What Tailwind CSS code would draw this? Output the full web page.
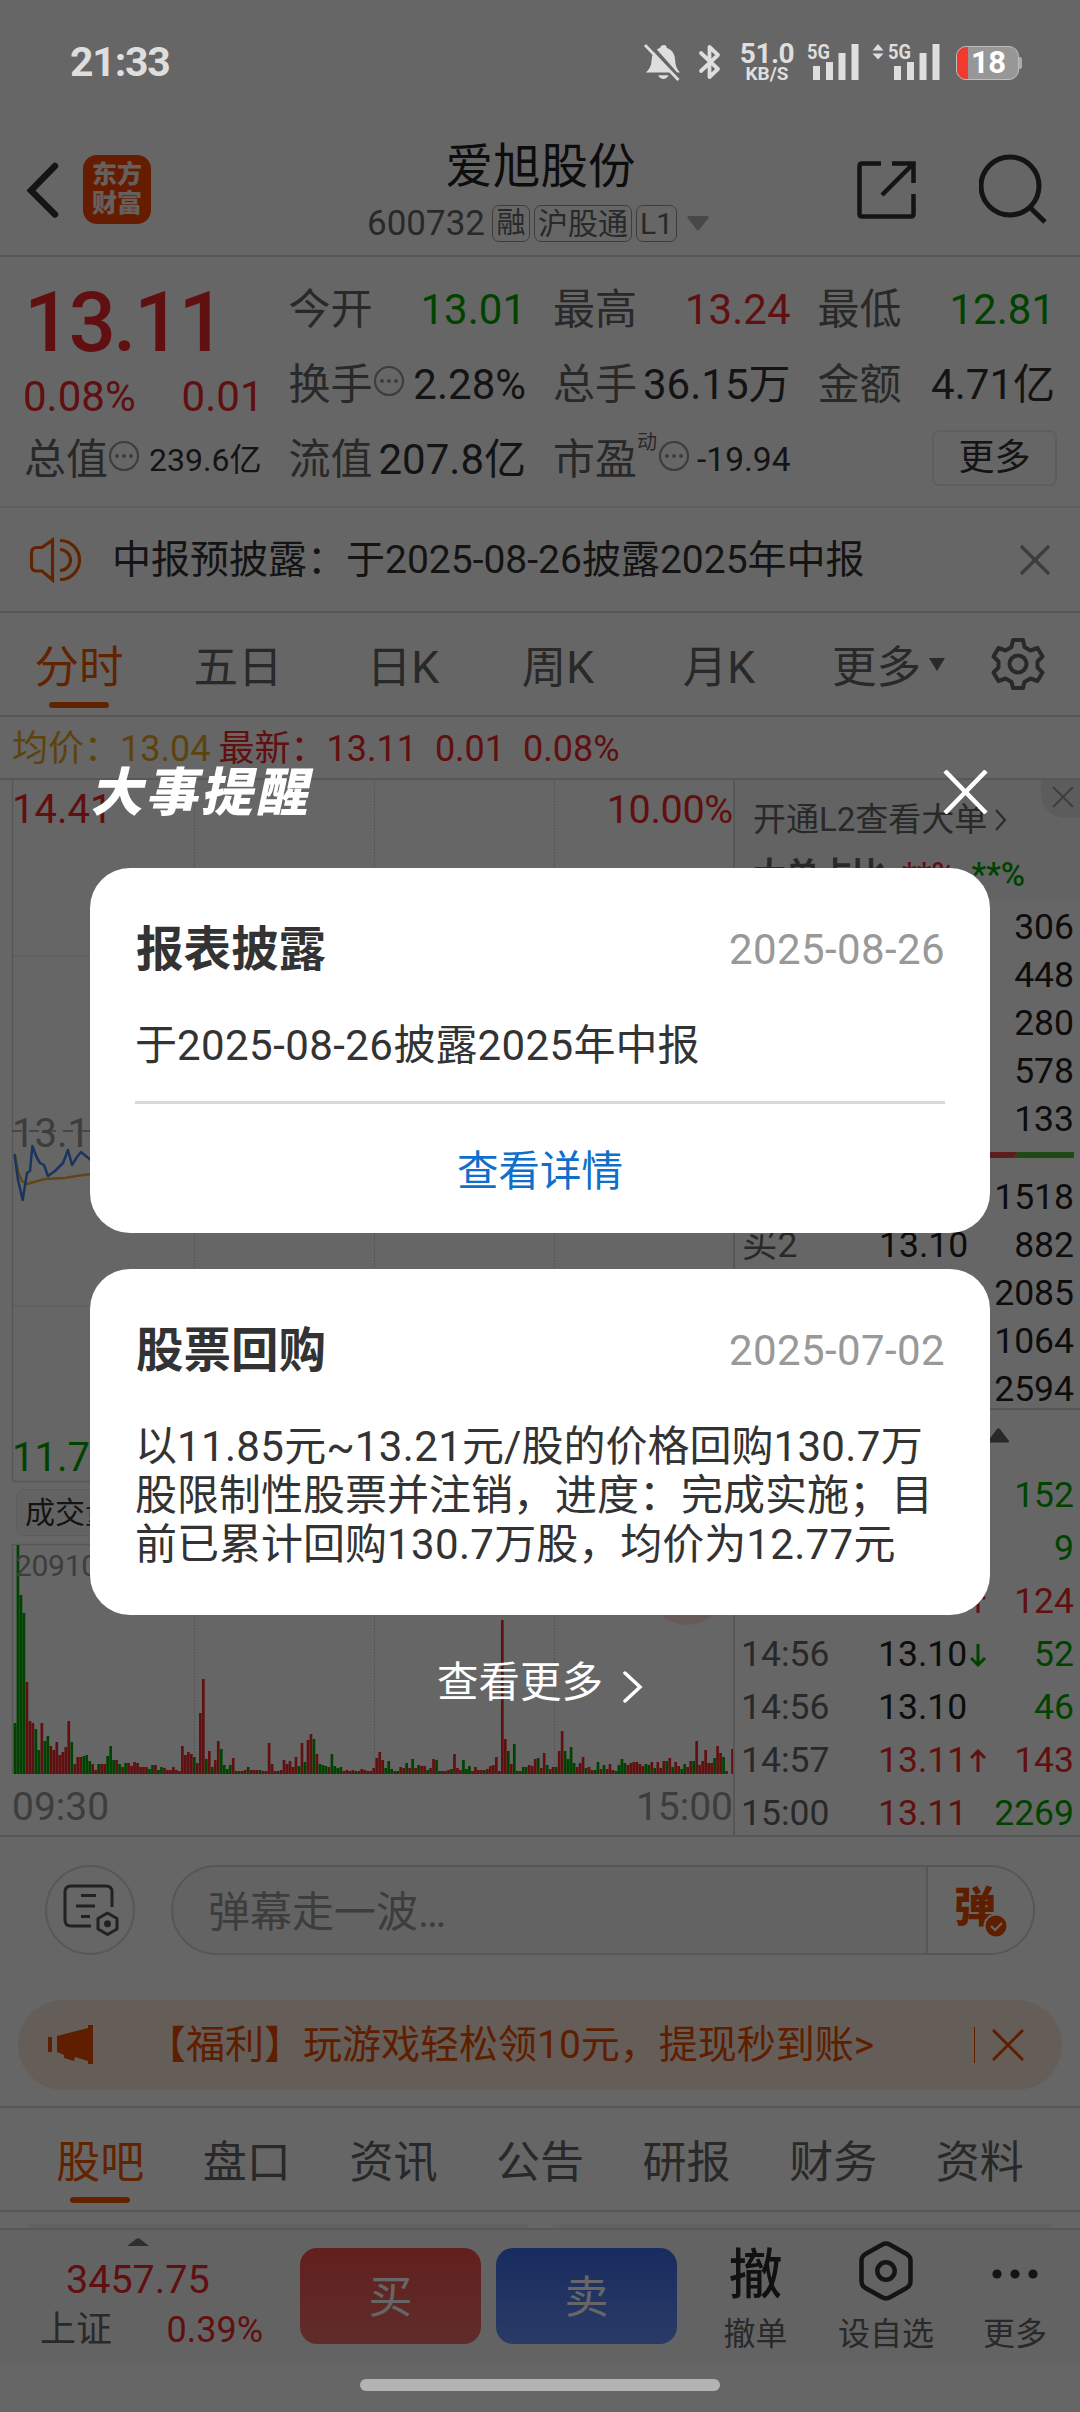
<!DOCTYPE html>
<html lang="zh-CN">
<head>
<meta charset="utf-8">
<title>爱旭股份 600732</title>
<script src="https://cdn.jsdelivr.net/npm/@tailwindcss/browser@4"></script>
</head>
<body class="relative h-[2412px] w-[1080px] overflow-hidden bg-white font-['Roboto','Noto_Sans_CJK_SC',sans-serif] leading-none whitespace-nowrap text-[#333]">

<!-- Quote page -->
<div class="flex h-[2412px] w-[1080px] flex-col">

  <!-- Header -->
  <header class="flex h-[257px] shrink-0 items-start border-b-2 border-[#d9d9d9] pt-[140px]">
    <div class="flex w-[368px] items-center pt-[15px] pl-[24px]">
      <svg class="h-[60px] w-[40px]" viewBox="0 0 40 60" fill="none" stroke="#333" stroke-width="6.5" stroke-linecap="round" stroke-linejoin="miter"><path d="M31 10 7 34.500 31 58.500" transform="translate(0 -4)"/></svg>
      <div class="ml-[19px] flex h-[69px] w-[68px] flex-col items-center justify-center gap-[4px] rounded-[14px] bg-[#ff4600] pb-[2px] text-[25px] font-black text-white/90">
        <span>东方</span><span>财富</span>
      </div>
    </div>
    <div class="flex w-[345px] flex-col items-center">
      <h1 class="mt-[4px] text-[47.500px] text-[#222]">爱旭股份</h1>
      <div class="mt-[14px] flex h-[36px] w-full items-center text-[#666]">
        <span class="ml-[-1px] text-[35px]">600732</span>
        <span class="ml-[7px] flex h-[37px] w-[38px] items-center justify-center rounded-[7px] border-[1.500px] border-[#999] text-[29px]">融</span>
        <span class="ml-[4px] flex h-[37px] w-[98px] items-center justify-center rounded-[7px] border-[1.500px] border-[#999] text-[30px]">沪股通</span>
        <span class="ml-[4px] flex h-[37px] w-[41px] items-center justify-center rounded-[7px] border-[1.500px] border-[#999] text-[30px]">L1</span>
        <svg class="ml-[10px] h-[15px] w-[22px]" viewBox="0 0 22 15"><path d="M1 0h20q1 1 .5 2L12 14q-1 1-2 0L.5 2Q0 1 1 0z" fill="#b3b3b3"/></svg>
      </div>
    </div>
    <svg class="mt-[20px] ml-[143px] h-[60px] w-[60px]" viewBox="0 0 60 60" fill="none" stroke="#333" stroke-width="4.500"><path d="M25 3.500H6q-2.500 0-2.500 2.500v48q0 2.500 2.500 2.500h49q2.500 0 2.500-2.500V34M36 3.500h21.500V23M57 4 26 35"/></svg>
    <svg class="mt-[12px] ml-[63px] h-[74px] w-[72px]" viewBox="0 0 72 74" fill="none" stroke="#333" stroke-width="5"><circle cx="31" cy="34" r="29"/><path d="M50.500 55 66 70"/></svg>
  </header>

  <!-- Key figures -->
  <section class="grid h-[251px] shrink-0 grid-cols-4 grid-rows-[75px_75px_75px] gap-x-[27px] border-b-2 border-[#ededed] pt-[15px] pr-[25px] pl-[24px] text-[42px] text-[#666]">
    <div class="row-span-2 flex flex-col text-[#f12a2a]">
      <span class="mt-[9px] text-[83px] font-medium tracking-[-2.500px]">13.11</span>
      <span class="mt-[12px] mr-[-2px] ml-[-1px] flex justify-between"><span>0.08%</span><span>0.01</span></span>
    </div>
    <div class="flex items-center justify-between">今开<span class="text-[#00a800]">13.01</span></div>
    <div class="flex items-center justify-between">最高<span class="text-[#f12a2a]">13.24</span></div>
    <div class="flex items-center justify-between">最低<span class="text-[#00a800]">12.81</span></div>

    <div class="flex items-center justify-between"><span class="flex items-center">换手<svg class="mb-[8px] h-[32px] w-[32px]" viewBox="0 0 32 32"><circle cx="16" cy="16" r="14" fill="none" stroke="#999" stroke-width="2.200"/><g fill="#999"><circle cx="9" cy="16" r="2"/><circle cx="16" cy="16" r="2"/><circle cx="23" cy="16" r="2"/></g></svg></span><span class="text-[#333]">2.28%</span></div>
    <div class="flex items-center justify-between">总手<span class="text-[#333]">36.15万</span></div>
    <div class="flex items-center justify-between">金额<span class="text-[#333]">4.71亿</span></div>

    <div class="flex items-center justify-between"><span class="flex items-center">总值<svg class="mb-[8px] h-[32px] w-[32px]" viewBox="0 0 32 32"><circle cx="16" cy="16" r="14" fill="none" stroke="#999" stroke-width="2.200"/><g fill="#999"><circle cx="9" cy="16" r="2"/><circle cx="16" cy="16" r="2"/><circle cx="23" cy="16" r="2"/></g></svg></span><span class="text-[32px] text-[#333]">239.6亿</span></div>
    <div class="flex items-center justify-between">流值<span class="text-[#333]">207.8亿</span></div>
    <div class="flex items-center justify-between"><span class="flex items-center">市盈<span class="mb-[36px] text-[20px]">动</span><svg class="mb-[8px] ml-[1px] h-[32px] w-[32px]" viewBox="0 0 32 32"><circle cx="16" cy="16" r="14" fill="none" stroke="#999" stroke-width="2.200"/><g fill="#999"><circle cx="9" cy="16" r="2"/><circle cx="16" cy="16" r="2"/><circle cx="23" cy="16" r="2"/></g></svg></span><span class="text-[33.500px] text-[#333]">-19.94</span></div>
    <div class="flex items-center justify-end"><span class="mr-[-2px] mb-[4px] flex h-[56px] w-[125px] items-center justify-center rounded-[7px] border-2 border-[#ebebeb] text-[36px] text-[#333]">更多</span></div>
  </section>

  <!-- Notice -->
  <section class="flex h-[105px] shrink-0 items-center border-b-2 border-[#d9d9d9] pr-[30px] pl-[28px]">
    <svg class="h-[46px] w-[54px]" viewBox="0 0 54 46" fill="none" stroke="#f55a00" stroke-width="3.200"><path d="M24.500 3v40L14 34H7.500Q3.500 33 3.500 29V16Q3.500 11 8 10.500H14zM32 3.500a19.500 19.500 0 0 1 0 39M32 12.500a10.500 10.500 0 0 1 0 21"/></svg>
    <p class="ml-[30px] grow pt-[1px] text-[39px]">中报预披露：于2025-08-26披露2025年中报</p>
    <svg class="h-[30px] w-[30px]" viewBox="0 0 30 30" stroke="#999" stroke-width="3.500"><path d="m1 1 28 28M29 1 1 29"/></svg>
  </section>

  <!-- Period tabs -->
  <nav class="flex h-[104px] shrink-0 items-stretch border-b-2 border-[#d9d9d9] text-[44.500px] text-[#666]">
    <div class="flex w-[158px] flex-col items-center text-[#f55a00]"><span class="mt-[33px]">分时</span><span class="mt-[11px] h-[6px] w-[60px] rounded-full bg-[#f55a00]"></span></div>
    <span class="mt-[33px] w-[160px] text-center">五日</span>
    <span class="mt-[33px] w-[170px] text-center">日K</span>
    <span class="mt-[33px] w-[140px] text-center">周K</span>
    <span class="mt-[33px] w-[182px] text-center">月K</span>
    <span class="mt-[33px] ml-[22px] flex">更多<svg class="mt-[12px] ml-[8px] h-[14px] w-[16px]" viewBox="0 0 16 14"><path d="M0 0h16L8 13z" fill="#666"/></svg></span>
    <svg class="mt-[24px] ml-[46px] h-[54px] w-[54px]" viewBox="0 0 54 54" fill="none" stroke="#666" stroke-width="4" stroke-linejoin="round"><circle cx="27" cy="27" r="8.500"/><path d="M22 3h10l1.500 7 6 3.500 7-2.500 5 8.500-5 5v6l5 5-5 8.500-7-2.500-6 3.500L32 51H22l-1.500-6-6-3.500-7 2.500-5-8.500 5-5v-6l-5-5 5-8.500 7 2.500 6-3.500z"/></svg>
  </nav>

  <!-- Latest figures -->
  <div class="flex h-[63px] shrink-0 items-center border-b-2 border-[#d9d9d9] pt-[2px] pl-[12px] text-[36px] text-[#f12a2a]">
    <span class="text-[#e8a825]">均价：13.04</span><span class="ml-[8px]">最新：13.11</span><span class="ml-[18px]">0.01</span><span class="ml-[18px]">0.08%</span>
  </div>

  <!-- Chart and order book -->
  <section class="flex h-[1057px] shrink-0 border-b-2 border-[#d9d9d9]">
    <div class="relative w-[735px] border-r-2 border-[#d9d9d9]">
      <svg class="block h-[1055px] w-[733px]" viewBox="0 0 733 1055" fill="none">
        <g stroke="#d9d9d9" stroke-width="1.500"><path d="M12.500 0v701M12 701.500h720M12.500 764v230M12 764.500h720"/></g>
        <g stroke="#ccc" stroke-width="1" stroke-dasharray="1.500 1.500"><path d="M194.500 0v700M374.500 0v700M554.500 0v700M194.500 764v230M374.500 764v230M554.500 764v230M12 176h720M12 526h720"/></g>
        <path d="M12 351h720" stroke="#999" stroke-width="1.500" stroke-dasharray="10 7"/>
        <circle cx="687" cy="806" r="39" fill="#ffe4dc"/>
        <path d="M15 375 18 392 22 401 27 404 34 402 45 399 65 398 76 396 92 394" stroke="#f0b03a" stroke-width="2.500"/>
        <path d="M14.500 374 18 400 22.700 420 27 393 30 391 32.400 366 36.500 377 40 383 44 385 48 396 55 391 63 383 68 370 72 385 77 377 81 372 92 381" stroke="#3f86e8" stroke-width="2.500" stroke-linejoin="round"/>
        <g id="volume"></g>
      </svg>
      <span class="absolute top-[10px] left-[12px] text-[40px] text-[#f12a2a]">14.41</span>
      <span class="absolute top-[10px] right-0 text-[39.500px] tracking-[-0.300px] text-[#f12a2a]">10.00%</span>
      <span class="absolute top-[334px] left-[12px] text-[40px] text-[#999]">13.1</span>
      <span class="absolute top-[658px] left-[12px] text-[40px] text-[#00a800]">11.7</span>
      <span class="absolute top-[709px] left-[16px] flex h-[47px] w-[130px] items-center rounded-[8px] border-[1.500px] border-[#e8e8e8] bg-[#f7f7f7] pt-[1px] pl-[8px] text-[30px]">成交量</span>
      <span class="absolute top-[771px] left-[15px] text-[30px] tracking-[-0.300px] text-[#999]">20910</span>
      <span class="absolute top-[1008px] left-[12px] text-[39px] text-[#999]">09:30</span>
      <span class="absolute top-[1008px] right-0 text-[39px] text-[#999]">15:00</span>
    </div>
    <div class="flex grow flex-col overflow-hidden text-[35.500px] text-[#222]">
      <div class="relative h-[120px] shrink-0 bg-[#f7f7f7] pt-[23px] pl-[18px] text-[33px] text-[#666]">
        <div class="flex items-center">开通L2查看大单<svg class="ml-[8px] h-[22px] w-[12px]" viewBox="0 0 12 22" fill="none" stroke="#666" stroke-width="2"><path d="m1 1 9 10-9 10"/></svg></div>
        <div class="mt-[22px] flex font-medium"><span class="font-bold">大单占比</span><span class="ml-[17px] text-[#f12a2a]">**%</span><span class="ml-[16px] text-[#00a800]">**%</span></div>
        <div class="absolute top-0 right-0 flex h-[38px] w-[39px] items-center justify-center rounded-bl-[24px] bg-[#e6e6e6] pb-[4px] pl-[4px]"><svg class="h-[22px] w-[22px]" viewBox="0 0 22 22" stroke="#999" stroke-width="2"><path d="m1 1 20 20M21 1 1 21"/></svg></div>
      </div>
      <div class="flex h-[243px] shrink-0 flex-col items-end pt-[3px] pr-[6px] leading-[48px]"><span>306</span><span>448</span><span>280</span><span>578</span><span>133</span></div>
      <svg class="mt-[9px] h-[6px] w-[345px] shrink-0" viewBox="0 0 345 6"><path d="M6 0h277l-4 6H6z" fill="#e84a4a"/><path d="M283 0h56v6h-60z" fill="#4fb63a"/></svg>
      <div class="mt-[15px] flex h-[237px] shrink-0 flex-col border-b-2 border-[#d9d9d9] pr-[6px] pl-[7px] leading-[48px]">
        <div class="text-right">1518</div>
        <div class="flex justify-between"><span class="w-[137px] text-[#666]">买2</span><span>13.10</span><span class="grow text-right">882</span></div>
        <div class="text-right">2085</div>
        <div class="text-right">1064</div>
        <div class="text-right">2594</div>
      </div>
      <div class="h-[59px] shrink-0 pt-[18px] pl-[252px]"><svg class="h-[15px] w-[23px]" viewBox="0 0 23 15"><path d="M10 1q1.500-1.500 3 0l9 12q.5 1-1 1.500H2Q.5 14 1 13z" fill="#666"/></svg></div>
      <div class="flex flex-col pr-[6px] pl-[6px] leading-[53px]">
        <div class="text-right text-[#00a800]">152</div>
        <div class="text-right text-[#00a800]">9</div>
        <div class="flex items-center text-[#f12a2a]"><svg class="ml-[229px] h-[24px] w-[16px]" viewBox="0 0 16 24" fill="none" stroke="#f12a2a" stroke-width="3"><path d="M8 23V2M1 9l7-7 7 7"/></svg><span class="grow text-right">124</span></div>
        <div class="flex items-center"><span class="w-[137px] text-[#666]">14:56</span><span class="w-[92px]">13.10</span><svg class="h-[24px] w-[16px]" viewBox="0 0 16 24" fill="none" stroke="#00a800" stroke-width="3"><path d="M8 1v21M1 15l7 7 7-7"/></svg><span class="grow text-right text-[#00a800]">52</span></div>
        <div class="flex items-center"><span class="w-[137px] text-[#666]">14:56</span><span class="w-[92px]">13.10</span><span class="grow text-right text-[#00a800]">46</span></div>
        <div class="flex items-center text-[#f12a2a]"><span class="w-[137px] text-[#666]">14:57</span><span class="w-[92px]">13.11</span><svg class="h-[24px] w-[16px]" viewBox="0 0 16 24" fill="none" stroke="#f12a2a" stroke-width="3"><path d="M8 23V2M1 9l7-7 7 7"/></svg><span class="grow text-right">143</span></div>
        <div class="flex items-center text-[#f12a2a]"><span class="w-[137px] text-[#666]">15:00</span><span class="w-[92px]">13.11</span><span class="grow text-right text-[#00a800]">2269</span></div>
      </div>
    </div>
  </section>

  <!-- Live comment bar -->
  <section class="flex h-[163px] shrink-0 items-start pt-[28px] pl-[45px]">
    <div class="flex h-[90px] w-[90px] items-center justify-center rounded-full border-2 border-[#dadcdc]">
      <svg class="h-[54px] w-[58px]" viewBox="0 0 58 54" fill="none" stroke="#555" stroke-width="3"><path d="M51 24V9q0-6-6-6H10Q4 3 4 9v28q0 6 6 6h20M20 12.500h15M15 23h19M20 33.500h9"/><path d="m46.500 30 9.500 5.500v10.500l-9.500 5.500-9.500-5.500V35.500z" stroke-linejoin="round"/><circle cx="46.500" cy="40.700" r="2" fill="#555"/></svg>
    </div>
    <div class="ml-[36px] flex h-[90px] w-[864px] overflow-hidden rounded-full border-2 border-[#d5d9d9] bg-[#f7f7f7]">
      <span class="mt-[25px] ml-[35px] text-[42px] text-[#999]">弹幕走一波…</span>
      <div class="relative ml-auto w-[107px] border-l-2 border-[#d5d9d9] bg-white">
        <span class="absolute top-[20px] left-[26px] text-[42px] font-black text-[#f04c00]">弹</span>
        <svg class="absolute top-[46px] left-[55px] h-[26px] w-[26px]" viewBox="0 0 26 26"><circle cx="13" cy="13" r="11.500" fill="#f04c00" stroke="#fff" stroke-width="2"/><path d="m8 13 4 4 7-7" fill="none" stroke="#fff" stroke-width="2.200"/></svg>
      </div>
    </div>
  </section>

  <!-- Promotion -->
  <section class="mx-[18px] flex h-[90px] shrink-0 items-center rounded-full bg-[#fae8dc] text-[39px] text-[#f04c00]">
    <svg class="ml-[30px] h-[40px] w-[46px]" viewBox="0 0 46 40" fill="#f04c00"><path d="M0 12h4v15H0zM9 11 40 3V0h5v39h-5v-3l-13-4-1 4-10-3v-3L9 27z"/></svg>
    <span class="ml-[53px]">【福利】玩游戏轻松领10元，提现秒到账&gt;</span>
    <span class="mr-[17px] ml-auto h-[36px] w-[1px] bg-[#f04c00]"></span>
    <svg class="mr-[38px] h-[32px] w-[32px]" viewBox="0 0 32 32" stroke="#f04c00" stroke-width="3"><path d="m1 1 30 30M31 1 1 31"/></svg>
  </section>

  <!-- Content tabs -->
  <nav class="mt-[16px] flex h-[106px] shrink-0 border-y-2 border-[#d9d9d9] px-[27px] pt-[33px] text-[44px] text-[#666]">
    <div class="flex flex-1 flex-col items-center text-[#f55a00]">股吧<span class="mt-[12px] h-[6px] w-[60px] rounded-full bg-[#f55a00]"></span></div>
    <span class="flex-1 text-center">盘口</span><span class="flex-1 text-center">资讯</span><span class="flex-1 text-center">公告</span><span class="flex-1 text-center">研报</span><span class="flex-1 text-center">财务</span><span class="flex-1 text-center">资料</span>
  </nav>
  <div class="flex h-[16px] shrink-0 items-end gap-[23px] overflow-hidden px-[27px]">
    <span class="h-[4px] flex-1 rounded-t-[12px] bg-[#f2f5fb]"></span><span class="h-[4px] flex-1 rounded-t-[12px] bg-[#fbf4f1]"></span>
  </div>

  <!-- Trade bar -->
  <footer class="flex h-[136px] shrink-0 border-t-2 border-[#d9d9d9] bg-[#f7f7f7]">
    <div class="flex w-[300px] flex-col pr-[37px] pl-[40px]">
      <svg class="mt-[8px] ml-[87px] h-[8px] w-[22px]" viewBox="0 0 22 8"><path d="M0 8 9 1q2-1.500 4 0l9 7z" fill="#777"/></svg>
      <span class="mt-[14px] ml-[26px] text-[39.500px] text-[#f12a2a]">3457.75</span>
      <span class="mt-[12px] flex justify-between text-[36px] text-[#666]">上证<span class="text-[#f12a2a]">0.39%</span></span>
    </div>
    <div class="mt-[18px] flex h-[96px] w-[181px] items-center justify-center rounded-[17px] bg-linear-to-b from-[#f54e4b] to-[#ee706b] pt-[4px] text-[44px] text-white">买</div>
    <div class="mt-[18px] ml-[15px] flex h-[96px] w-[181px] items-center justify-center rounded-[17px] bg-linear-to-b from-[#3c6eee] to-[#6b93ff] pt-[4px] text-[44px] text-white">卖</div>
    <div class="ml-[23px] flex w-[111px] flex-col items-center text-[32px] text-[#666]"><span class="mt-[19px] text-[54px] font-medium text-[#2b2b2b]">撤</span><span class="mt-[15px]">撤单</span></div>
    <div class="ml-[12px] flex w-[126px] flex-col items-center text-[32px] text-[#666]"><svg class="mt-[11px] h-[60px] w-[54px]" viewBox="0 0 54 60" fill="none" stroke="#333" stroke-width="4.500"><path d="M23 3.700q4-2.200 8 0l17 9.600q3.500 2.200 3.500 6v21.400q0 3.800-3.500 6l-17 9.600q-4 2.200-8 0L6 46.700q-3.500-2.200-3.500-6V19.300q0-3.800 3.500-6z"/><circle cx="27" cy="30" r="8.700"/></svg><span class="mt-[17px]">设自选</span></div>
    <div class="ml-[17px] flex w-[98px] flex-col items-center text-[32px] text-[#666]"><svg class="mt-[11px] h-[60px] w-[54px]" viewBox="0 0 54 60" fill="#333"><circle cx="9" cy="33" r="4.600"/><circle cx="27" cy="33" r="4.600"/><circle cx="45" cy="33" r="4.600"/></svg><span class="mt-[17px]">更多</span></div>
  </footer>
</div>

<!-- Event reminder overlay -->
<div class="absolute inset-0 flex flex-col bg-black/60">
  <div class="flex h-[120px] items-start pt-[44px] pl-[70px] text-[#dedede]">
    <span class="mt-[-2px] text-[41px] font-bold tracking-[-1.200px]">21:33</span>
    <svg class="absolute top-[42px] left-[641px] h-[40px] w-[82px]" viewBox="0 0 82 40">
      <path d="M4 31q6-5 6-12 0-11 9-14 1-3 4-3t3 3q9 3 9 14 0 7 5 12zM17 34h11q-2 4-5.500 4T17 34z" fill="#dedede" transform="translate(1 1) scale(.95)"/>
      <path d="m6.500 0 32 36" stroke="#666" stroke-width="4"/><path d="m4 3 33.500 35" stroke="#dedede" stroke-width="2.800"/>
      <path d="m60 11 17 16-8.500 8V5L77 13 60 29" fill="none" stroke="#dedede" stroke-width="3.800" stroke-linejoin="round" stroke-linecap="round"/>
    </svg>
    <span class="absolute top-[40px] left-[740px] flex w-[54px] flex-col items-center font-bold"><span class="h-[25px] text-[28px] leading-[27px] tracking-[-0.500px]">51.0</span><span class="text-[19px] leading-[17px]">KB/S</span></span>
    <svg class="absolute top-[36px] left-[804px] h-[46px] w-[138px]" viewBox="0 -6 138 46" fill="#dedede">
      <text x="3" y="17" class="text-[21px] font-bold" textLength="23" lengthAdjust="spacingAndGlyphs">5G</text>
      <path d="M9 24h7v14H9zM22 20h7v18h-7zM34.500 11h7v27h-7zM47.500 2h7v36h-7z"/>
      <path d="m74 2 5.500 6.500h-11zM74 17.500l5.500-6h-11z"/>
      <text x="84" y="17" class="text-[21px] font-bold" textLength="23" lengthAdjust="spacingAndGlyphs">5G</text>
      <path d="M90 24h7v14h-7zM103 20h7v18h-7zM115.500 11h7v27h-7zM128.500 2h7v36h-7z"/>
    </svg>
    <span class="absolute top-[46px] left-[956px] flex h-[34px] w-[63px] rounded-[10px] border border-[#bdbdbd] bg-[#979797]"><span class="w-[11px] rounded-l-[9px] bg-[#f03a2e]"></span><span class="ml-[3px] w-[34px] text-center text-[31px] leading-[32px] font-bold tracking-[-0.500px] text-white">18</span></span>
    <span class="absolute top-[57px] left-[1019px] h-[12px] w-[3px] rounded-r-[2px] bg-[#aaa]"></span>
  </div>

  <div class="mt-[645px] flex h-[103px] items-start justify-between pr-[92px] pl-[94px] text-white">
    <h2 class="mt-[3px] -skew-x-12 text-[52px] font-black tracking-[3px]">大事提醒</h2>
    <svg class="mt-[5px] h-[44px] w-[45px]" viewBox="0 0 45 44" stroke="#fff" stroke-width="4.500"><path d="m2 1 41 42M43 1 2 43"/></svg>
  </div>

  <article class="mx-[90px] h-[365px] rounded-[40px] bg-white px-[45px] pt-[57px]">
    <div class="flex items-center justify-between"><h3 class="ml-[1px] pt-[2px] text-[47.500px] font-bold">报表披露</h3><time class="text-[42px] tracking-[0.400px]">
      <span class="text-[#999]">2025-08-26</span></time></div>
    <p class="mt-[50px] text-[42px]">于<span class="tracking-[0.430px]">2025-08-26</span>披露<span class="tracking-[0.430px]">2025</span>年中报</p>
    <div class="mt-[34px] h-[3px] bg-[#d8d8d8]"></div>
    <p class="mt-[47px] text-center text-[41.500px] text-[#0f6fcc]">查看详情</p>
  </article>
  <article class="mx-[90px] mt-[36px] h-[346px] rounded-[40px] bg-white px-[45px] pt-[57px]">
    <div class="flex items-center justify-between"><h3 class="ml-[1px] pt-[2px] text-[47.500px] font-bold">股票回购</h3><time class="text-[42px] tracking-[0.400px]"><span class="text-[#999]">2025-07-02</span></time></div>
    <p class="mt-[46px] text-[42px] leading-[49px]">以<span class="tracking-[0.350px]">11.85</span>元~<span class="tracking-[0.350px]">13.21</span>元/股的价格回购<span class="tracking-[0.350px]">130.7</span>万<br>股限制性股票并注销，进度：完成实施；目<br>前已累计回购<span class="tracking-[0.350px]">130.7</span>万股，均价为<span class="tracking-[0.350px]">12.77</span>元</p>
  </article>
  <div class="mt-[47px] flex items-start justify-center text-[41.500px] text-white">查看更多<svg class="mt-[9px] ml-[20px] h-[32px] w-[20px]" viewBox="0 0 20 32" fill="none" stroke="#fff" stroke-width="3.500" stroke-linecap="round"><path d="m2 2 15 14L2 30"/></svg></div>
  <span class="mx-auto mt-auto mb-[21px] h-[12px] w-[360px] rounded-full bg-[#b3b3b3]"></span>
</div>

<script>
  // Volume per minute: bar height, positive when the price rose, negative when it fell
  const v = [-51,-229,-179,-161,92,53,51,-45,-24,51,-33,-38,28,24,32,19,22,27,53,-32,10,17,17,-18,-19,-13,10,4,-10,10,10,-18,-28,-14,14,-10,7,-11,11,8,12,11,7,7,7,-5,-9,9,-4,-7,6,4,4,7,4,3,28,19,22,20,-17,11,61,95,-15,23,-7,14,33,-25,-9,-5,-9,16,3,-3,3,4,-7,4,4,4,-4,3,3,31,10,3,-3,4,14,10,13,7,17,-8,31,-12,34,40,-35,20,-10,-9,-8,7,-20,-8,-6,-7,3,4,3,4,-3,3,5,4,3,3,6,16,22,14,-6,-13,-5,3,-3,7,6,-11,6,-15,6,-9,8,8,-4,6,15,-14,-3,3,3,4,-5,20,6,4,-14,-5,-8,3,7,4,4,-4,5,8,9,17,3,154,35,-23,10,-30,-3,3,-7,-7,9,8,15,-16,6,21,-9,5,7,-7,23,43,-23,-15,-27,-11,7,11,17,-6,7,4,-4,-12,5,-9,5,10,4,-3,-9,-15,-11,9,11,12,12,10,8,-10,-9,12,-6,12,6,13,-13,16,-7,12,8,-5,-10,7,13,-13,33,9,13,24,11,11,-16,28,21,-17,3,0,25];
  const path = s => v.map((h, i) => h * s > 0 ? `M${(13.6 + i * 2.99).toFixed(2)} 994v${-Math.abs(h)}h2.7v${Math.abs(h)}z` : '').join('');
  document.getElementById('volume').innerHTML = `<path d="${path(1)}" fill="#f12a2a"/><path d="${path(-1)}" fill="#00a800"/>`;
</script>
</body>
</html>
